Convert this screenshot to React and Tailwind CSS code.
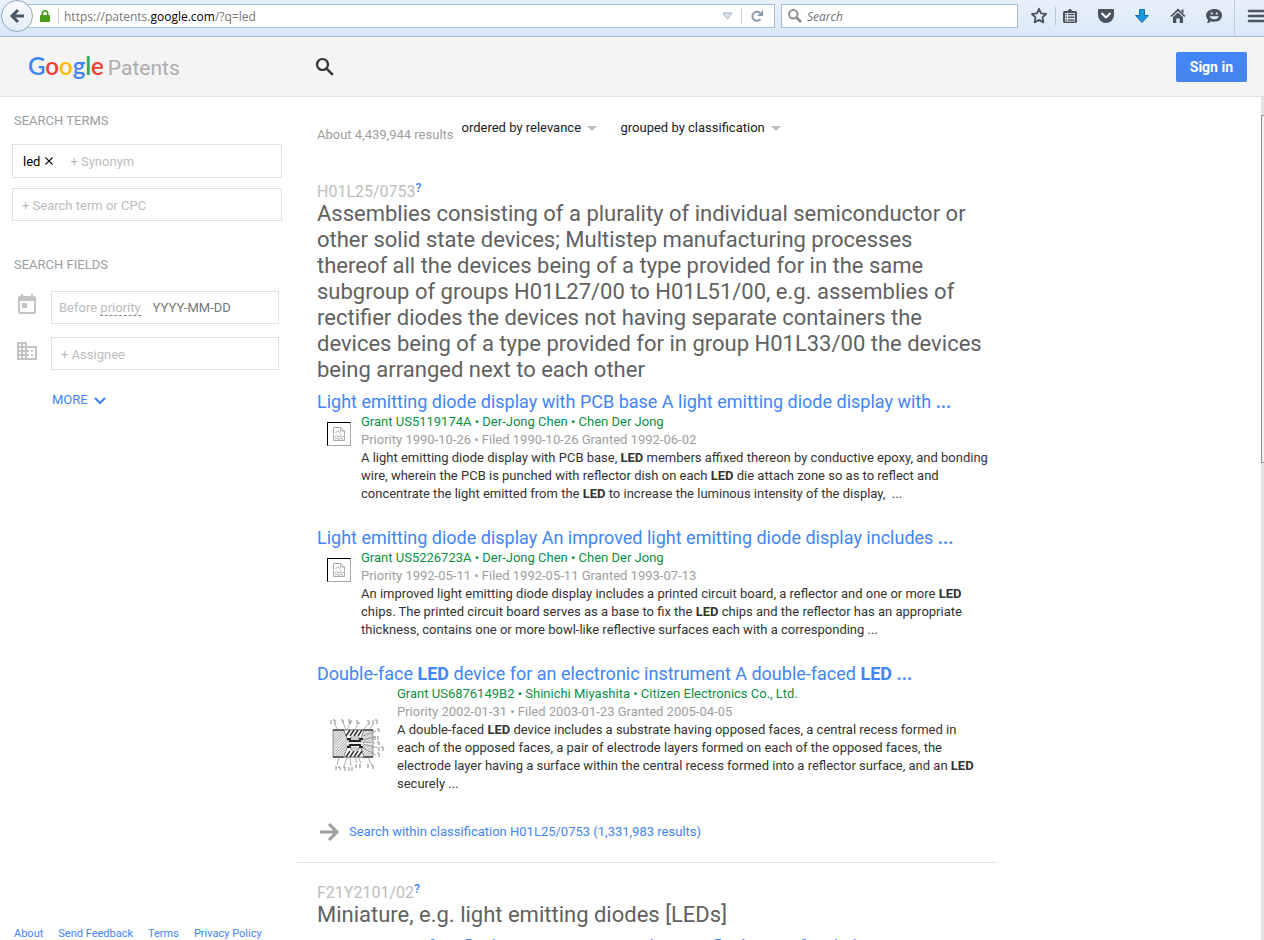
import { MdBusiness, MdClose, MdToday } from "react-icons/md";

const GROUPS = [
  {
    code: "H01L25/0753",
    title:
      "Assemblies consisting of a plurality of individual semiconductor or other solid state devices; Multistep manufacturing processes thereof all the devices being of a type provided for in the same subgroup of groups H01L27/00 to H01L51/00, e.g. assemblies of rectifier diodes the devices not having separate containers the devices being of a type provided for in group H01L33/00 the devices being arranged next to each other",
    count: "1,331,983",
    results: [
      {
        title: "Light emitting diode display with PCB base A light emitting diode display with ...",
        grant: "Grant US5119174A • Der-Jong Chen • Chen Der Jong",
        dates: "Priority 1990-10-26 • Filed 1990-10-26 Granted 1992-06-02",
        text: "A light emitting diode display with PCB base, LED members affixed thereon by conductive epoxy, and bonding wire, wherein the PCB is punched with reflector dish on each LED die attach zone so as to reflect and concentrate the light emitted from the LED to increase the luminous intensity of the display, \u00a0...",
      },
      {
        title: "Light emitting diode display An improved light emitting diode display includes ...",
        grant: "Grant US5226723A • Der-Jong Chen • Chen Der Jong",
        dates: "Priority 1992-05-11 • Filed 1992-05-11 Granted 1993-07-13",
        text: "An improved light emitting diode display includes a printed circuit board, a reflector and one or more LED chips. The printed circuit board serves as a base to fix the LED chips and the reflector has an appropriate thickness, contains one or more bowl-like reflective surfaces each with a corresponding ...",
      },
      {
        title: "Double-face LED device for an electronic instrument A double-faced LED ...",
        grant: "Grant US6876149B2 • Shinichi Miyashita • Citizen Electronics Co., Ltd.",
        dates: "Priority 2002-01-31 • Filed 2003-01-23 Granted 2005-04-05",
        text: "A double-faced LED device includes a substrate having opposed faces, a central recess formed in each of the opposed faces, a pair of electrode layers formed on each of the opposed faces, the electrode layer having a surface within the central recess formed into a reflector surface, and an LED securely ...",
        figure: true,
      },
    ],
  },
  {
    code: "F21Y2101/02",
    title: "Miniature, e.g. light emitting diodes [LEDs]",
    results: [{ title: "Low power safety flasher A miniature strobe type flashing safety light" }],
  },
];

const FOOTER_LINKS = ["About", "Send Feedback", "Terms", "Privacy Policy"];

// Bolds the query term, and the ellipsis too when asked.
function Marked({ text, dots }) {
  const parts = text.split(dots ? /(\bLED\b|\.\.\.)/ : /(\bLED\b)/);
  return parts.map((p, i) => (i % 2 ? <b key={i} className="font-bold">{p}</b> : p));
}

function ToolbarIcons() {
  const btn = "flex w-9 h-8 items-center justify-center";
  return (
    <div className="flex items-start text-[#4a5560]">
      <button aria-label="Bookmark this page" className="flex w-8 h-8 items-center justify-center">
        <svg width="18" height="18" viewBox="0 0 18 18" fill="none" stroke="currentColor" strokeWidth="1.8" strokeLinejoin="round">
          <path d="M9 1.8l2.1 4.6 5 .6-3.7 3.4 1 5L9 12.9l-4.4 2.5 1-5L1.900 7l5-.6z" />
        </svg>
      </button>
      <span className="w-px h-[18px] mt-[7px] bg-[#b7c6d6]" />
      <button aria-label="Bookmarks" className="flex w-7 h-8 mr-1 items-center justify-center">
        <svg width="16" height="16" viewBox="0 0 16 16">
          <path d="M1 4.500a1.500 1.500 0 0 1 1.500-1.500H5.500L7.200 1h1.600l1.700 2h3A1.500 1.500 0 0 1 15 4.500v9a1.500 1.500 0 0 1-1.500 1.500h-11A1.500 1.500 0 0 1 1 13.500z" fill="currentColor" />
          <path d="M3 5h10v8.500H3z" fill="#f0f5fa" />
          <path d="M3.500 6.500H5M6 6.500h6.500M3.500 9.300H5M6 9.300h6.500M3.500 12H5M6 12h6.500" stroke="currentColor" strokeWidth="1.500" />
        </svg>
      </button>
      <button aria-label="Save to Pocket" className={btn}>
        <svg width="18" height="16" viewBox="0 0 18 16">
          <path d="M2 1h14a1 1 0 0 1 1 1v5a8 8 0 0 1-16 0V2a1 1 0 0 1 1-1z" fill="currentColor" />
          <path d="M5 5.500l4 4 4-4" fill="none" stroke="#fff" strokeWidth="2" strokeLinecap="round" strokeLinejoin="round" />
        </svg>
      </button>
      <button aria-label="Downloads" className={btn}>
        <svg width="16" height="16" viewBox="0 0 16 16">
          <path d="M5.500 1.500h5v6h4L8 14.500 1.500 7.500h4z" fill="#1b98dc" stroke="#1273ab" />
        </svg>
      </button>
      <button aria-label="Home" className={btn}>
        <svg width="16" height="16" viewBox="0 0 16 16">
          <path d="M1 8.500L8 1.800l7 6.700" fill="none" stroke="currentColor" strokeWidth="1.700" />
          <path d="M11.500 1.500h2v4l-2-1.900zM3 9l5-4.600L13 9v6H9.700v-4.500H6.300V15H3z" fill="currentColor" />
        </svg>
      </button>
      <button aria-label="Chat" className={btn}>
        <svg width="18" height="16" viewBox="0 0 18 16">
          <path d="M9.500 1C14 1 17 3.600 17 7.300s-3 6.500-7.500 6.500c-1.300 0-2.400-.2-3.400-.6C5 14.500 3.500 15 1.500 15c1-.8 1.500-1.800 1.600-3.100C1.800 10.700 1 9.100 1 7.300 1 3.600 5 1 9.500 1z" fill="currentColor" />
          <circle cx="6.800" cy="5.500" r="1.100" fill="#e4eef8" />
          <circle cx="11.800" cy="5.500" r="1.100" fill="#e4eef8" />
          <path d="M4.500 8.300h9.500c-.8 2-2.500 3-4.700 3s-4-1-4.800-3z" fill="#e4eef8" />
        </svg>
      </button>
      <span className="w-px h-9 ml-[2px] bg-[#bfcddc]" />
      <button aria-label="Open menu" className="flex h-8 items-center pl-3">
        <svg width="17" height="16" viewBox="0 0 17 16" stroke="currentColor" strokeWidth="2.600" strokeLinecap="round">
          <path d="M2 3h18M2 8h18M2 13h18" />
        </svg>
      </button>
    </div>
  );
}

function BrowserBar() {
  return (
    <div className="flex shrink-0 h-[37px] items-start border-b border-[#a9bfd6] bg-linear-to-b from-[#e8f1fa] to-[#d9e8f7] overflow-hidden">
      <button
        aria-label="Back"
        className="relative z-10 flex shrink-0 w-8 h-8 ml-px items-center justify-center rounded-full border border-[#93a5b8] bg-linear-to-b from-[#fafcfe] to-[#e2ecf6]"
      >
        <svg width="16" height="16" viewBox="0 0 16 16" fill="none" stroke="#4b5866" strokeWidth="3">
          <path d="M15 8H4M9 2L3 8l6 6" />
        </svg>
      </button>
      <div className="flex flex-1 h-6 mt-1 -ml-3 pl-[18px] items-center border border-[#a9bdd2] bg-white">
        <svg width="10" height="12" viewBox="0 0 10 12" role="img" aria-label="Secure">
          <path d="M2.300 6V3.600a2.700 2.700 0 0 1 5.400 0V6" fill="none" stroke="#4b9e1c" strokeWidth="1.700" />
          <rect y="5" width="10" height="7" rx="1" fill="#4b9e1c" />
        </svg>
        <span className="w-px h-4 ml-2 mr-[5px] bg-[#ccd2d8]" />
        <div
          role="textbox"
          aria-label="Address"
          contentEditable
          suppressContentEditableWarning
          className="flex-1 pt-px font-['Open_Sans',sans-serif] text-xs text-[#777] outline-none"
        >
          https://patents.<span className="text-black">google.com</span>/?q=led
        </div>
        <button aria-label="Show history" className="px-2">
          <svg width="11" height="8" viewBox="0 0 11 8">
            <path d="M1 1h9L5.500 7z" fill="#dfe6ee" stroke="#9fb0c2" />
          </svg>
        </button>
        <span className="w-px h-4 bg-[#ccd2d8]" />
        <button aria-label="Reload" className="pl-[9px] pr-[11px]">
          <svg width="12" height="12" viewBox="0 0 12 12">
            <path d="M9.500 9A4.500 4.500 0 1 1 9 3" fill="none" stroke="#8b9bab" strokeWidth="2" />
            <path d="M12 0v6H6z" fill="#8b9bab" />
          </svg>
        </button>
      </div>
      <label className="flex w-[237px] h-6 mt-1 ml-[6px] px-[6px] items-center gap-[5px] border border-[#a9bdd2] bg-white">
        <svg width="14" height="14" viewBox="0 0 14 14" fill="none" stroke="#8e8e8e" className="shrink-0">
          <circle cx="5.300" cy="5.300" r="4.200" strokeWidth="2" />
          <path d="M8.500 8.500L13 13" strokeWidth="2.600" />
        </svg>
        <input
          aria-label="Search the web"
          placeholder="Search"
          className="w-full min-w-0 pt-px font-['Open_Sans',sans-serif] text-xs italic outline-none placeholder:text-[#757575]"
        />
      </label>
      <div className="ml-[5px]">
        <ToolbarIcons />
      </div>
    </div>
  );
}

function Header() {
  return (
    <header className="flex shrink-0 h-[60px] items-center border-b border-[#e0e0e0] bg-[#f4f4f4] pr-[17px]">
      <div className="w-[287px] shrink-0 pl-7 pt-px">
        <a href="#" className="flex items-baseline gap-1">
          <span className="font-['Lato',sans-serif] text-2xl font-semibold">
            <span className="text-[#4285f4]">G</span>
            <span className="text-[#ea4335]">o</span>
            <span className="text-[#fbbc05]">o</span>
            <span className="text-[#4285f4]">g</span>
            <span className="text-[#34a853]">l</span>
            <span className="text-[#ea4335]">e</span>
          </span>
          <span className="text-[21px] text-[#adadad]">Patents</span>
        </a>
      </div>
      <button aria-label="Search" className="ml-[26px] pt-px">
        <svg width="24" height="24" viewBox="0 0 24 24" fill="none" stroke="#333">
          <circle cx="9.500" cy="9.500" r="5.500" strokeWidth="2.200" />
          <path d="M13.800 13.800l6 6" strokeWidth="2.500" />
        </svg>
      </button>
      <button className="ml-auto h-[30px] px-[14px] rounded-xs bg-linear-to-b from-[#4387fd] to-[#4683ea] text-sm font-bold text-white">
        Sign in
      </button>
    </header>
  );
}

function Sidebar() {
  const box = "flex items-center border border-[#e0e0e0] bg-white";
  const input = "w-full min-w-0 pt-[2px] outline-none placeholder:text-[#bdbdbd]";
  return (
    <aside className="flex shrink-0 w-[297px] flex-col pl-3 pt-[14px]">
      <h2 className="pl-[2px] leading-5 text-[#9e9e9e]">SEARCH TERMS</h2>
      <div className={`${box} w-[270px] h-[34px] mt-[13px] pl-[10px]`}>
        <span className="pt-px text-black">led</span>
        <button aria-label="Remove led" className="ml-[2px] text-black">
          <MdClose size={14} />
        </button>
        <input aria-label="Synonym" placeholder="+ Synonym" className={`${input} ml-[14px]`} />
      </div>
      <div className={`${box} w-[270px] h-[33px] mt-[10px] pl-[9px]`}>
        <input aria-label="Search term or CPC" placeholder="+ Search term or CPC" className={input} />
      </div>

      <h2 className="mt-[34px] pl-[2px] leading-5 text-[#9e9e9e]">SEARCH FIELDS</h2>
      <div className="flex mt-4 w-[267px]">
        <MdToday size={24} className="shrink-0 mt-[2px] ml-[3px] mr-3 text-[#c4c4c4]" />
        <div className={`${box} flex-1 h-[33px] pl-[7px]`}>
          <label htmlFor="date" className="shrink-0 text-[#bdbdbd]">
            Before <span className="border-b border-dashed border-[#888]">priority</span>
          </label>
          <input
            id="date"
            placeholder="YYYY-MM-DD"
            className="w-full min-w-0 ml-3 outline-none placeholder:text-[#757575]"
          />
        </div>
      </div>
      <div className="flex mt-[13px] w-[267px]">
        <MdBusiness size={24} className="shrink-0 ml-[3px] mr-3 mt-[2px] text-[#c4c4c4]" />
        <div className={`${box} flex-1 h-[33px] pl-[9px]`}>
          <input aria-label="Assignee" placeholder="+ Assignee" className={input} />
        </div>
      </div>
      <button className="flex self-start mt-5 ml-10 h-5 items-center gap-[6px] text-[#4285f4]">
        MORE
        <svg width="12" height="8" viewBox="0 0 12 8" fill="none" stroke="currentColor" strokeWidth="2.200" className="mt-[2px]">
          <path d="M1 1l5 5 5-5" />
        </svg>
      </button>

      <footer className="flex mt-auto pl-[2px] gap-[15px] text-[11px] leading-[13px] text-[#4285f4]">
        {FOOTER_LINKS.map((l) => <a key={l} href="#">{l}</a>)}
      </footer>
    </aside>
  );
}

function Sorter({ label, name }) {
  return (
    <label className="flex items-center gap-[5px] text-[#212121]">
      <select aria-label={name} className="appearance-none outline-none bg-transparent">
        <option>{label}</option>
      </select>
      <svg width="10" height="5" viewBox="0 0 10 5" className="pointer-events-none">
        <path d="M0 0h10L5 5z" fill="#bdbdbd" />
      </svg>
    </label>
  );
}

// Placeholder for a drawing that is missing.
function MissingThumb() {
  return (
    <div className="shrink-0 w-6 h-6 mt-[9px] ml-[10px] mr-[10px] flex items-center justify-center border border-t-black border-l-black border-r-[#aaa] border-b-[#aaa]">
      <svg width="12" height="14" viewBox="0 0 12 14" fill="none" stroke="#aaa">
        <path d="M.5 7V.5h7l4 3.500v3.500M7.500.5V4h4M2.500 6L5 3.500l2 2.500 1.500 1.500M.5 8.500l2 1.500L4 8.500l2 1.500 2-1.500L9.500 10l2-1.500v5H.5zM2 12l2-1 2 1.500 2-1.500 2 1.500" />
      </svg>
    </div>
  );
}

// Cross-section of the double-faced device with its reference leads.
function FigureThumb() {
  return (
    <svg width="56" height="56" viewBox="0 0 56 56" className="shrink-0 mt-8 ml-3 mr-3" fill="none" stroke="#777" strokeWidth="0.600">
      <defs>
        <pattern id="hatch" width="2" height="2" patternUnits="userSpaceOnUse" patternTransform="rotate(45)">
          <path d="M0 0V2" stroke="#888" strokeWidth="1.400" />
        </pattern>
      </defs>
      <path d="M4 13h40v27H4z" fill="url(#hatch)" stroke="#555" />
      <path d="M4 13h11M34 13h10M4 40h11M34 40h10" stroke="#444" strokeWidth="1.500" />
      <path d="M15 13h20l-4 11H19zM19 28h12l4 12H15z" fill="#fff" stroke="#444" />
      <path d="M18 25.500h26v2H18z" fill="#eee" stroke="none" />
      <path d="M18 22h3v2h10v-2h3M18 30h3v-2h10v2h3" stroke="#222" strokeWidth="1.800" />
      <path d="M17 19l4-6M21 19l4-6M25 19l4-6M29 19l4-6M17 40l4-6M21 40l4-6M25 40l4-6M29 40l4-6" stroke="#333" strokeWidth="1.500" />
      <path d="M22 20h8v2h-8zM22 31h8v2h-8z" fill="#fff" stroke="#555" />
      <path d="M5 6l4 7M14 5l3 8M21 6l-3 7M29 6l-4 9M39 7l-6 7M45 6l-5 7M8 48l2-8M15 49l4-10M22 49l-1-9M28 46l-3-8M32 46l-4-8M42 47l-3-7" />
      <path d="M47 14l-13 5M46 20l-12 3M46 26l-12 -1M49 31l-15-4M47 38l-13-7" />
      <path d="M2 3v4M4 3h2v4M12 3h2v3M20 2v4h2V3M28 3v3h3M38 4h2v4M44 3v4M46 3h2v4M48 12h2v3M46 19v4M49 19v4M48 25h2v3M50 30v4M52 30h2v4M48 36h2v4M7 49v4M9 50h2v3M14 50h2v4M20 50v4M23 50v4M27 47v4M31 47v4M39 47v4M42 48h2v4" stroke="#888" strokeWidth="1" />
    </svg>
  );
}

function Result({ r }) {
  return (
    <article className="pb-[23px]">
      <h3 className="h-[23px] text-[18px] leading-[23px] text-[#4285f4]">
        <a href="#"><Marked text={r.title} dots /></a>
      </h3>
      {r.text && (
        <div className="flex leading-[18px]">
          {r.figure ? <FigureThumb /> : <MissingThumb />}
          <div className={r.figure ? "pr-3" : ""}>
            <p className="text-[#0b9043]">{r.grant}</p>
            <p className="text-[#9e9e9e]">{r.dates}</p>
            <p className="text-[#333]"><Marked text={r.text} /></p>
          </div>
        </div>
      )}
    </article>
  );
}

function Group({ g }) {
  return (
    <section className="pl-5 pr-1 border-b border-[#e0e0e0] mb-5">
      <div className="flex h-[19px] items-center text-base text-[#bdbdbd]">
        {g.code}
        <a href="#" aria-label={`About ${g.code}`} className="mb-2 text-xs font-medium text-[#4285f4]">?</a>
      </div>
      <h2 className="mb-[7px] pr-2 text-[22px] leading-[26px] text-[#616161]">{g.title}</h2>
      {g.results.map((r) => <Result key={r.title} r={r} />)}
      {g.count && (
        <a href="#" className="flex mt-1 mb-[18px] items-center gap-2 leading-6 text-[#4285f4]">
          <svg width="24" height="24" viewBox="0 0 24 24" fill="none" stroke="#9e9e9e" strokeWidth="3">
            <path d="M3 12h15M12 4l8 8-8 8" />
          </svg>
          Search within classification {g.code} ({g.count} results)
        </a>
      )}
    </section>
  );
}

export default function App() {
  return (
    <div className="flex h-screen flex-col overflow-hidden bg-white font-['Roboto',sans-serif] text-[13px]">
      <BrowserBar />
      <Header />
      <div className="flex flex-1 min-h-0">
        <Sidebar />
        <main className="flex-1 min-w-0 overflow-hidden">
          <div className="max-w-[700px]">
            <div className="flex px-5 pt-[21px] pb-[37px] items-start">
              <p className="mt-[7px] mr-2 leading-5 text-[#9e9e9e]">About 4,439,944 results</p>
              <div className="flex gap-6 leading-5">
                <Sorter name="Order" label="ordered by relevance" />
                <Sorter name="Grouping" label="grouped by classification" />
              </div>
            </div>
            {GROUPS.map((g) => <Group key={g.code} g={g} />)}
          </div>
        </main>
        <div className="w-[3px] shrink-0 pt-[18px] bg-[#e4e4e4]">
          <div className="h-[348px] border-y border-l border-[#8e8e8e] bg-[#f4f4f4]" />
        </div>
      </div>
    </div>
  );
}
